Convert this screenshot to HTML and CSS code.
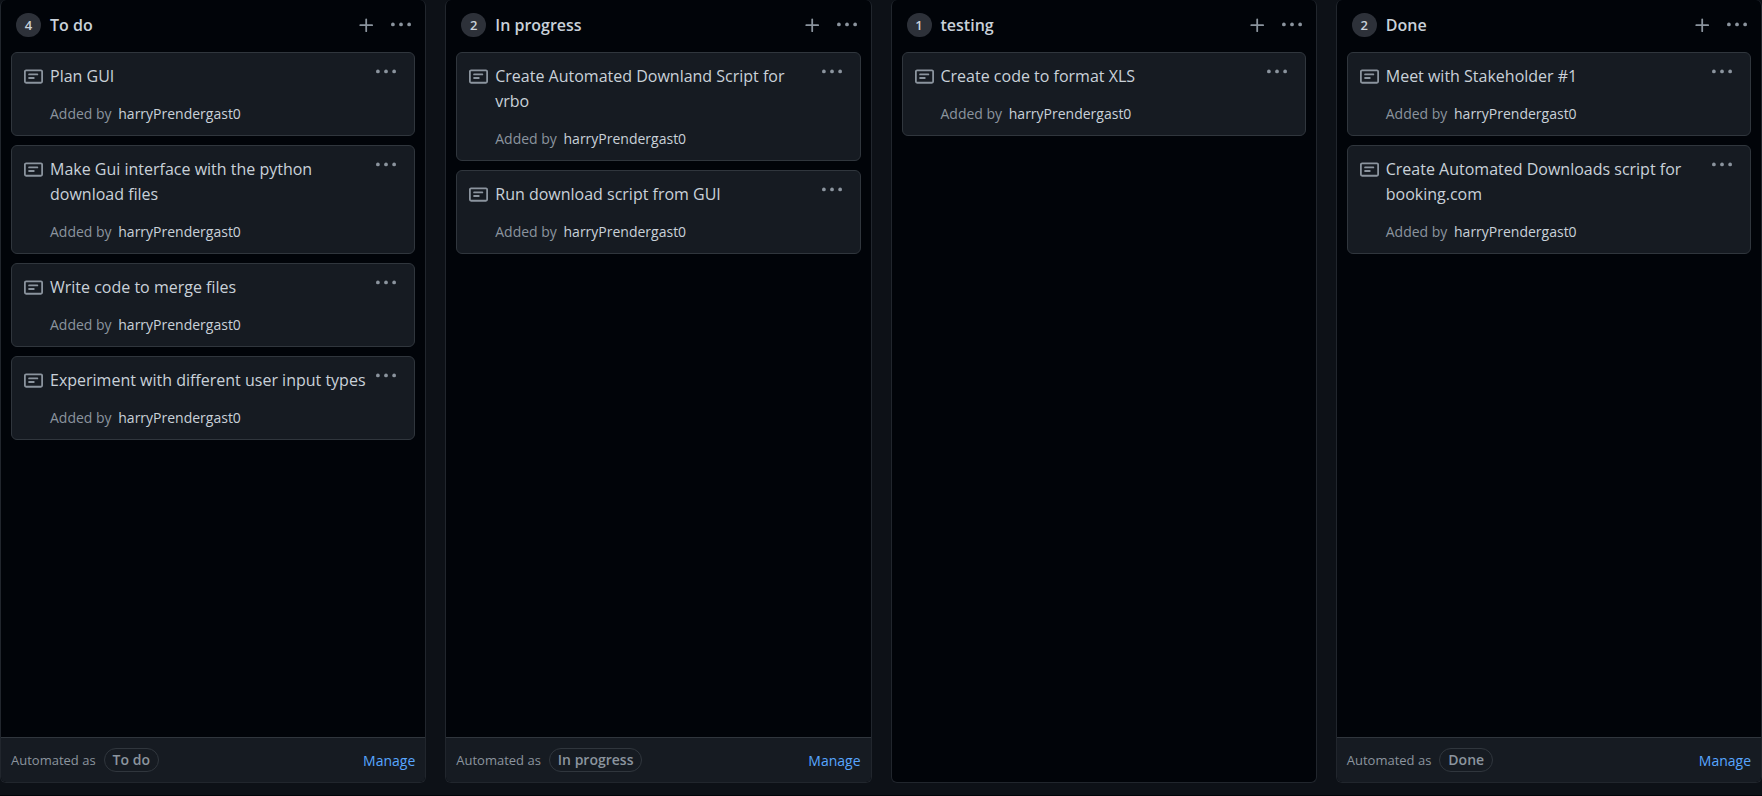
FILE: index.html
```html
<!DOCTYPE html>
<html lang="en">
<head>
<meta charset="utf-8">
<title>Project board</title>
<link rel="stylesheet" href="styles.css">
</head>
<body>
<svg class="sprite" aria-hidden="true">
  <symbol id="note" viewBox="0 0 16 16"><path fill-rule="evenodd" d="M0 3.75C0 2.784.784 2 1.75 2h12.5c.966 0 1.75.784 1.75 1.75v8.5A1.75 1.75 0 0 1 14.25 14H1.75A1.75 1.75 0 0 1 0 12.25v-8.5zm1.75-.25a.25.25 0 0 0-.25.25v8.5c0 .138.112.25.25.25h12.5a.25.25 0 0 0 .25-.25v-8.5a.25.25 0 0 0-.25-.25H1.75zM3.5 6.25a.75.75 0 0 1 .75-.75h7a.75.75 0 0 1 0 1.5h-7a.75.75 0 0 1-.75-.75zm.75 2.25a.75.75 0 0 0 0 1.5h4a.75.75 0 0 0 0-1.5h-4z"/></symbol>
  <symbol id="plus" viewBox="0 0 16 16"><path d="M7.75 2a.75.75 0 0 1 .75.75V7h4.25a.75.75 0 0 1 0 1.5H8.5v4.25a.75.75 0 0 1-1.5 0V8.5H2.75a.75.75 0 0 1 0-1.5H7V2.75A.75.75 0 0 1 7.75 2z"/></symbol>
  <symbol id="dots" viewBox="0 0 16 16"><circle cx="1.5" cy="7.5" r="1.5"/><circle cx="8" cy="7.5" r="1.5"/><circle cx="14.5" cy="7.5" r="1.5"/></symbol>
</svg>
<main class="board">
  <section class="column">
    <header class="column-head">
      <span class="count">4</span>
      <h3 class="column-title">To do</h3>
      <button class="icon-button" aria-label="Add a note to To do"><svg class="icon"><use href="#plus"/></svg></button>
      <button class="icon-button" aria-label="To do column menu"><svg class="icon icon-dots"><use href="#dots"/></svg></button>
    </header>
    <div class="cards">
      <article class="card">
        <svg class="icon note"><use href="#note"/></svg>
        <div class="card-body"><p class="card-text">Plan GUI</p><small class="meta">Added by <a class="author" href="#">harryPrendergast0</a></small></div>
        <button class="icon-button card-menu" aria-label="Card menu"><svg class="icon icon-dots"><use href="#dots"/></svg></button>
      </article>
      <article class="card">
        <svg class="icon note"><use href="#note"/></svg>
        <div class="card-body"><p class="card-text">Make Gui interface with the python download files</p><small class="meta">Added by <a class="author" href="#">harryPrendergast0</a></small></div>
        <button class="icon-button card-menu" aria-label="Card menu"><svg class="icon icon-dots"><use href="#dots"/></svg></button>
      </article>
      <article class="card">
        <svg class="icon note"><use href="#note"/></svg>
        <div class="card-body"><p class="card-text">Write code to merge files</p><small class="meta">Added by <a class="author" href="#">harryPrendergast0</a></small></div>
        <button class="icon-button card-menu" aria-label="Card menu"><svg class="icon icon-dots"><use href="#dots"/></svg></button>
      </article>
      <article class="card">
        <svg class="icon note"><use href="#note"/></svg>
        <div class="card-body"><p class="card-text">Experiment with different user input types</p><small class="meta">Added by <a class="author" href="#">harryPrendergast0</a></small></div>
        <button class="icon-button card-menu" aria-label="Card menu"><svg class="icon icon-dots"><use href="#dots"/></svg></button>
      </article>
    </div>
    <footer class="column-foot"><span>Automated as</span><span class="pill">To do</span><a class="manage" href="#">Manage</a></footer>
  </section>
  <section class="column">
    <header class="column-head">
      <span class="count">2</span>
      <h3 class="column-title">In progress</h3>
      <button class="icon-button" aria-label="Add a note to In progress"><svg class="icon"><use href="#plus"/></svg></button>
      <button class="icon-button" aria-label="In progress column menu"><svg class="icon icon-dots"><use href="#dots"/></svg></button>
    </header>
    <div class="cards">
      <article class="card">
        <svg class="icon note"><use href="#note"/></svg>
        <div class="card-body"><p class="card-text">Create Automated Downland Script for vrbo</p><small class="meta">Added by <a class="author" href="#">harryPrendergast0</a></small></div>
        <button class="icon-button card-menu" aria-label="Card menu"><svg class="icon icon-dots"><use href="#dots"/></svg></button>
      </article>
      <article class="card">
        <svg class="icon note"><use href="#note"/></svg>
        <div class="card-body"><p class="card-text">Run download script from GUI</p><small class="meta">Added by <a class="author" href="#">harryPrendergast0</a></small></div>
        <button class="icon-button card-menu" aria-label="Card menu"><svg class="icon icon-dots"><use href="#dots"/></svg></button>
      </article>
    </div>
    <footer class="column-foot"><span>Automated as</span><span class="pill">In progress</span><a class="manage" href="#">Manage</a></footer>
  </section>
  <section class="column">
    <header class="column-head">
      <span class="count">1</span>
      <h3 class="column-title">testing</h3>
      <button class="icon-button" aria-label="Add a note to testing"><svg class="icon"><use href="#plus"/></svg></button>
      <button class="icon-button" aria-label="testing column menu"><svg class="icon icon-dots"><use href="#dots"/></svg></button>
    </header>
    <div class="cards">
      <article class="card">
        <svg class="icon note"><use href="#note"/></svg>
        <div class="card-body"><p class="card-text">Create code to format XLS</p><small class="meta">Added by <a class="author" href="#">harryPrendergast0</a></small></div>
        <button class="icon-button card-menu" aria-label="Card menu"><svg class="icon icon-dots"><use href="#dots"/></svg></button>
      </article>
    </div>
  </section>
  <section class="column">
    <header class="column-head">
      <span class="count">2</span>
      <h3 class="column-title">Done</h3>
      <button class="icon-button" aria-label="Add a note to Done"><svg class="icon"><use href="#plus"/></svg></button>
      <button class="icon-button" aria-label="Done column menu"><svg class="icon icon-dots"><use href="#dots"/></svg></button>
    </header>
    <div class="cards">
      <article class="card">
        <svg class="icon note"><use href="#note"/></svg>
        <div class="card-body"><p class="card-text">Meet with Stakeholder #1</p><small class="meta">Added by <a class="author" href="#">harryPrendergast0</a></small></div>
        <button class="icon-button card-menu" aria-label="Card menu"><svg class="icon icon-dots"><use href="#dots"/></svg></button>
      </article>
      <article class="card">
        <svg class="icon note"><use href="#note"/></svg>
        <div class="card-body"><p class="card-text">Create Automated Downloads script for booking.com</p><small class="meta">Added by <a class="author" href="#">harryPrendergast0</a></small></div>
        <button class="icon-button card-menu" aria-label="Card menu"><svg class="icon icon-dots"><use href="#dots"/></svg></button>
      </article>
    </div>
    <footer class="column-foot"><span>Automated as</span><span class="pill">Done</span><a class="manage" href="#">Manage</a></footer>
  </section>
</main>
</body>
</html>
```
FILE: styles.css
```css
* {
  box-sizing: border-box;
}

body {
  margin: 0;
  background: #0d1117;
  color: #c9d1d9;
  font-family: "Segoe UI", "Open Sans", "Noto Sans", sans-serif;
  font-size: 16px;
  line-height: 25px;
}

.sprite {
  display: none;
}

.board {
  display: grid;
  grid-template-columns: repeat(4, minmax(0, 1fr));
  gap: 19px;
  min-height: 100vh;
  padding-bottom: 12px;
  border-bottom: 1px solid #010409;
}

.column {
  display: flex;
  flex-direction: column;
  background: #010409;
  border: 1px solid #21262d;
  border-top: 0;
  border-radius: 6px;
  overflow: hidden;
}

.column-head {
  display: flex;
  align-items: center;
  height: 50px;
  padding: 0 14px 0 15px;
}

.count {
  min-width: 25px;
  height: 24px;
  border-radius: 12px;
  background: #2d3139;
  font-size: 13px;
  font-weight: 600;
  line-height: 24px;
  text-align: center;
}

.column-title {
  flex: 1;
  margin: 0 0 0 9px;
  font-size: 16px;
  font-weight: 600;
}

.icon-button {
  display: flex;
  margin: 0 0 0 15px;
  padding: 0;
  border: 0;
  background: none;
  color: #8b949e;
  cursor: pointer;
}

.icon {
  width: 19px;
  height: 19px;
  flex: none;
  fill: currentColor;
}

.icon-dots {
  width: 20px;
  height: 20px;
}

.cards {
  flex: 1;
  display: flex;
  flex-direction: column;
  gap: 9px;
  padding: 2px 10px;
}

.card {
  display: flex;
  align-items: flex-start;
  padding: 11px 18px 10px 12px;
  border: 1px solid #30363d;
  border-radius: 6px;
  background: #161b22;
}

.note {
  margin: 3px 7px 0 0;
  color: #8b949e;
}

.card-body {
  flex: 1;
  min-width: 0;
}

.card-text {
  margin: 0 0 14px;
}

.meta {
  display: block;
  color: #8b949e;
  font-size: 14px;
  line-height: 22px;
}

.author {
  margin-left: 3px;
  color: #c9d1d9;
  text-decoration: none;
}

.card-menu {
  margin: -2px 0 0 6px;
}

.column-foot {
  display: flex;
  align-items: center;
  height: 45px;
  padding: 0 10px;
  border-top: 1px solid #30363d;
  background: #161b22;
  color: #8b949e;
  font-size: 13px;
}

.pill {
  margin-left: 8px;
  padding: 0 8px;
  border: 1px solid #30363d;
  border-radius: 12px;
  font-size: 14px;
  font-weight: 600;
  line-height: 22px;
}

.manage {
  margin-left: auto;
  color: #58a6ff;
  font-size: 14px;
  text-decoration: none;
}
```
